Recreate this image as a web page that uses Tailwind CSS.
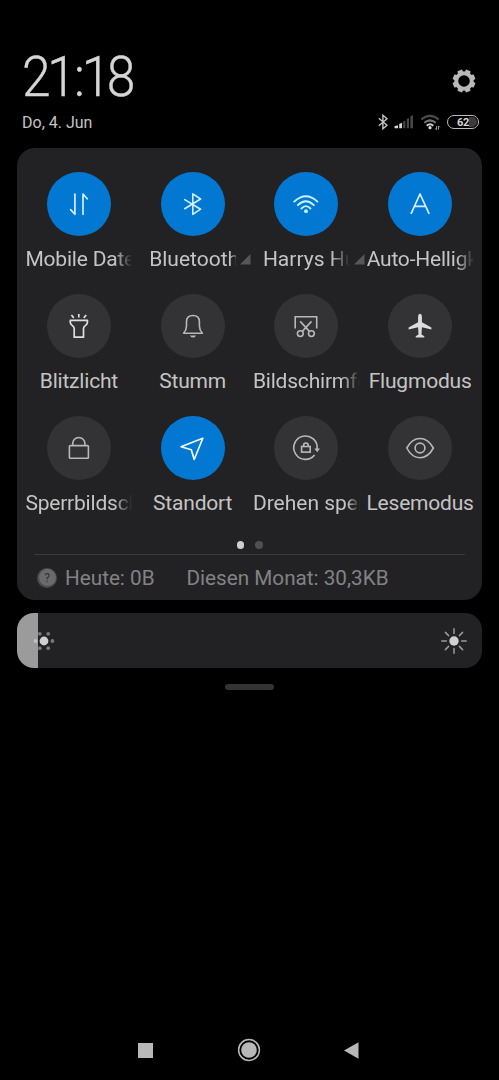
<!DOCTYPE html>
<html lang="de">
<head>
<meta charset="utf-8">
<title>Schnelleinstellungen</title>
<script src="https://cdn.jsdelivr.net/npm/@tailwindcss/browser@4"></script>
</head>
<body class="bg-black">
<div class="flex h-[1080px] w-[499px] flex-col overflow-hidden bg-black font-['Roboto',sans-serif] text-[#c4c4c4]">
  <header class="flex h-[148px] flex-col pl-[22px] pr-[20px] pt-[44px]">
    <div class="flex h-[66px] justify-between">
      <div class="origin-left scale-x-[0.92] text-[56px] font-light leading-[66px] text-[#d6d6d6] [-webkit-text-stroke:0.4px_#d6d6d6]"><span class="tracking-[-3.7px]">2</span><span class="tracking-[-1.8px]">1</span><span class="tracking-[-3.6px]">:</span><span class="tracking-[-3.9px]">1</span><span>8</span></div>
      <svg class="mt-[25px] mr-[3px] size-6" viewBox="-12 -12 24 24" fill="none">
        <circle r="7.7" stroke="#b9b9b9" stroke-width="3.8"/>
        <g fill="#b9b9b9">
          <path d="M-3.2-8-2.3-11.4H2.3L3.2-8Z" transform="rotate(22.5)"/>
          <path d="M-3.2-8-2.3-11.4H2.3L3.2-8Z" transform="rotate(67.5)"/>
          <path d="M-3.2-8-2.3-11.4H2.3L3.2-8Z" transform="rotate(112.5)"/>
          <path d="M-3.2-8-2.3-11.4H2.3L3.2-8Z" transform="rotate(157.5)"/>
          <path d="M-3.2-8-2.3-11.4H2.3L3.2-8Z" transform="rotate(202.5)"/>
          <path d="M-3.2-8-2.3-11.4H2.3L3.2-8Z" transform="rotate(247.5)"/>
          <path d="M-3.2-8-2.3-11.4H2.3L3.2-8Z" transform="rotate(292.5)"/>
          <path d="M-3.2-8-2.3-11.4H2.3L3.2-8Z" transform="rotate(337.5)"/>
        </g>
      </svg>
    </div>
    <div class="mt-[2px] flex h-5 items-center justify-between">
      <div class="pt-[2px] text-[16px] leading-5">Do, 4. Jun</div>
      <div class="flex h-5 items-center">
        <svg class="h-5 w-[70px]" viewBox="375 112 70 20" fill="none">
          <path d="M378.8 118.2 387 125.3 382.9 128.8V115.2L387 118.7 378.8 125.8" stroke="#c4c4c4" stroke-width="1.4"/>
          <path d="M394.5 128.3V126.3L398 125.3V128.3ZM399.2 128.3V124L402 122.7V128.3Z" fill="#d8d8d8"/>
          <path d="M403.2 128.3V121.5L405.4 120.5V128.3ZM406.8 128.3V119L409 118V128.3ZM410.4 128.3V116.5L413 115V128.3Z" fill="#484848"/>
          <path d="M421.3 119.6Q430 112.2 438.7 119.6" stroke="#4c4c4c" stroke-width="2"/>
          <path d="M424.3 122.8Q430 118 435.7 122.8" stroke="#777" stroke-width="2"/>
          <path d="M426.7 125.8Q430 122.8 433.3 125.8" stroke="#d0d0d0" stroke-width="2"/>
          <circle cx="430" cy="127.7" r="1.6" fill="#e0e0e0"/>
          <path d="M436.6 126V129.7L435.2 128.5M438.5 129.7V126L439.8 127.3" stroke="#aaa" stroke-width=".9"/>
        </svg>
        <div class="ml-[2px] flex h-[14px] w-[32px] items-center justify-center rounded-full border-[1.5px] border-[#bcbcbc] p-px">
          <div class="flex h-full w-full items-center justify-center rounded-full bg-[linear-gradient(90deg,transparent_72%,#3c3c3c_72%)] text-[11px] font-bold leading-none tracking-[-0.4px] text-[#d8d8d8]">62</div>
        </div>
      </div>
    </div>
  </header>

  <main class="mx-[17px] h-[452px] rounded-[18px] bg-[#222224] px-[5px] pt-[24px]">
    <div class="grid grid-cols-4 text-[21px] leading-[26px] tracking-[-0.2px]">
      <div class="flex h-[122px] flex-col items-center">
        <svg class="size-16 rounded-full bg-[#0278d2]" viewBox="0 0 64 64" fill="none" stroke="#d6efff" stroke-width="1.7" stroke-linecap="round" stroke-linejoin="round"><path d="M27.9 22V42.3L23.6 37.6M36 42.3V22L40.2 26.8"/></svg>
        <div class="mt-[10px] w-[107px] overflow-hidden whitespace-nowrap [mask-image:linear-gradient(90deg,#000_84%,transparent)]">Mobile Daten</div>
      </div>
      <div class="flex h-[122px] flex-col items-center">
        <svg class="size-16 rounded-full bg-[#0278d2]" viewBox="0 0 64 64" fill="none" stroke="#d6efff" stroke-width="1.6" stroke-linecap="round" stroke-linejoin="round"><path d="M23.7 27.6 39.6 37.2 31.8 42.3V21.9L39.6 27 23.7 36.7"/></svg>
        <div class="mt-[10px] flex w-[87px] whitespace-nowrap">
          <div class="w-[87px] shrink-0 overflow-hidden tracking-normal [mask-image:linear-gradient(90deg,#000_92%,transparent_104%)]">Bluetooth</div>
          <svg class="ml-[4px] mt-[8px] size-[11px] shrink-0" viewBox="0 0 11 11"><path d="M0 10.5 10.5 0V10.5Z" fill="#565658"/></svg>
        </div>
      </div>
      <div class="flex h-[122px] flex-col items-center">
        <svg class="size-16 rounded-full bg-[#0278d2]" viewBox="0 0 64 64" fill="none" stroke="#c9f2ff" stroke-width="1.9" stroke-linecap="round"><path d="M20.2 29.6Q32 19 43.4 29.6M23.8 33.1Q32 25.3 39.9 33.1M27.4 36.5Q32 31.8 36.4 36.5"/><circle cx="32" cy="39.2" r="1.9" fill="#c9f2ff" stroke="none"/></svg>
        <div class="mt-[10px] flex w-[87px] whitespace-nowrap">
          <div class="w-[87px] shrink-0 overflow-hidden tracking-normal [mask-image:linear-gradient(90deg,#000_78%,transparent)]">Harrys Hut</div>
          <svg class="ml-[4px] mt-[8px] size-[11px] shrink-0" viewBox="0 0 11 11"><path d="M0 10.5 10.5 0V10.5Z" fill="#565658"/></svg>
        </div>
      </div>
      <div class="flex h-[122px] flex-col items-center">
        <svg class="size-16 rounded-full bg-[#0278d2]" viewBox="0 0 64 64" fill="none" stroke="#d6efff" stroke-width="1.7" stroke-linejoin="round"><path d="M23 41.8 32 22 41.2 41.8M26.4 34.4H37.8"/></svg>
        <div class="mt-[10px] w-[107px] overflow-hidden whitespace-nowrap [mask-image:linear-gradient(90deg,#000_84%,transparent)]">Auto-Helligkeit</div>
      </div>

      <div class="flex h-[122px] flex-col items-center">
        <svg class="size-16 rounded-full bg-[#333335]" viewBox="0 0 64 64" fill="none" stroke="#dedede" stroke-width="1.7" stroke-linejoin="round"><path d="M23.3 26.3H40.4V28.6Q40.4 30.2 38.5 31.4 36.5 32.6 36.5 34.5V43.2H27.2V34.5Q27.2 32.6 25.2 31.4 23.3 30.2 23.3 28.6ZM31.8 20V23.6M24.4 21 26.8 23.9M39.2 21 36.8 23.9"/></svg>
        <div class="mt-[10px]">Blitzlicht</div>
      </div>
      <div class="flex h-[122px] flex-col items-center">
        <svg class="size-16 rounded-full bg-[#333335]" viewBox="0 0 64 64" fill="none" stroke="#b8b8b8" stroke-width="1.6" stroke-linejoin="round"><path d="M22.6 39.2Q25.5 36 25.5 32V27.8Q25.5 21.5 32 21.5T38.4 27.8V32Q38.4 36 41.4 39.2Z"/><path d="M29 41.4H35Q34 43.6 32 43.6T29 41.4Z" fill="#b8b8b8" stroke="none"/></svg>
        <div class="mt-[10px]">Stumm</div>
      </div>
      <div class="flex h-[122px] flex-col items-center">
        <svg class="size-16 rounded-full bg-[#333335]" viewBox="0 0 64 64" fill="none" stroke="#b8b8b8" stroke-width="1.6"><path d="M21.2 34.5V22.7H42.7V34.5M26.2 27.4 35.4 37.4M37.5 27.4 28.3 37.4"/><circle cx="26.3" cy="39.6" r="2.9"/><circle cx="37.4" cy="39.6" r="2.9"/></svg>
        <div class="mt-[10px] w-[107px] overflow-hidden whitespace-nowrap [mask-image:linear-gradient(90deg,#000_84%,transparent)]">Bildschirmfoto</div>
      </div>
      <div class="flex h-[122px] flex-col items-center">
        <svg class="size-16 rounded-full bg-[#333335]" viewBox="0 0 64 64" fill="#dcdcdc"><path d="M32 19.8Q33.9 20.2 33.9 22.4V28.2L43.4 33.6V35.6L33.9 33.3 33.5 40.4 36.3 42.2V43.6H27.7V42.2L30.5 40.4 30.1 33.3 20.6 35.6V33.6L30.1 28.2V22.4Q30.1 20.2 32 19.8Z"/></svg>
        <div class="mt-[10px]">Flugmodus</div>
      </div>

      <div class="flex h-[122px] flex-col items-center">
        <svg class="size-16 rounded-full bg-[#333335]" viewBox="0 0 64 64" fill="none" stroke="#b8b8b8" stroke-width="1.6"><rect x="22.4" y="29.6" width="19" height="12.6" rx=".8"/><path d="M25.7 29.6V27.6A6.1 6.1 0 0 1 37.9 27.6V29.6"/></svg>
        <div class="mt-[10px] w-[107px] overflow-hidden whitespace-nowrap [mask-image:linear-gradient(90deg,#000_84%,transparent)]">Sperrbildschirm</div>
      </div>
      <div class="flex h-[122px] flex-col items-center">
        <svg class="size-16 rounded-full bg-[#0278d2]" viewBox="0 0 64 64" fill="none" stroke="#f2faff" stroke-width="1.7" stroke-linejoin="round"><path d="M41.8 22.2 20 30.8 30.3 33.8 33.2 43.5Z"/></svg>
        <div class="mt-[10px]">Standort</div>
      </div>
      <div class="flex h-[122px] flex-col items-center">
        <svg class="size-16 rounded-full bg-[#333335]" viewBox="0 0 64 64" fill="none" stroke="#b8b8b8" stroke-width="1.6"><path d="M43.1 33A11.7 11.7 0 1 0 40.6 39"/><path d="M40.4 32.4H45.9L43.2 36.2Z" fill="#b8b8b8" stroke="none"/><rect x="27.6" y="30.5" width="8.6" height="5.6"/><path d="M29.6 30.5V29.3A2.3 2.3 0 0 1 34.2 29.3V30.5"/></svg>
        <div class="mt-[10px] w-[107px] overflow-hidden whitespace-nowrap tracking-normal [mask-image:linear-gradient(90deg,#000_88%,transparent)]">Drehen sperren</div>
      </div>
      <div class="flex h-[122px] flex-col items-center">
        <svg class="size-16 rounded-full bg-[#333335]" viewBox="0 0 64 64" fill="none" stroke="#b8b8b8" stroke-width="1.6" stroke-linejoin="round"><path d="M18.8 32C22 26 26.5 22.5 32 22.5S42 26 45.4 32C42 38.2 37.5 41.7 32 41.7S22 38.2 18.8 32Z"/><circle cx="32" cy="32" r="4.9"/></svg>
        <div class="mt-[10px]">Lesemodus</div>
      </div>
    </div>

    <div class="mt-[3px] flex h-[8px] justify-center gap-[11px]">
      <div class="size-[7.5px] rounded-full bg-[#cfcfcf]"></div>
      <div class="size-[7.5px] rounded-full bg-[#505052]"></div>
    </div>
    <div class="mx-[12px] mt-[5px] h-px bg-[#3a3a3c]"></div>
    <div class="flex h-[45px] items-center pl-[15px] text-[20.7px] leading-6 text-[#828284]">
      <div class="flex size-[20px] items-center justify-center rounded-full bg-[#4c4c4e]">
        <div class="flex size-[17px] items-center justify-center rounded-full bg-[#6a6a6c] text-[12px] leading-none text-[#303032]">?</div>
      </div>
      <div class="ml-[8px] w-[121.5px]">Heute: 0B</div>
      <div>Diesen Monat: 30,3KB</div>
    </div>
  </main>

  <div class="mx-[17px] mt-[13px] flex h-[55px] overflow-hidden rounded-[17px] bg-[linear-gradient(90deg,#9b9b9b_21.5px,#222224_21.5px)]">
    <div class="flex w-full items-center justify-between pl-[15px] pr-[14px]">
      <svg class="h-6 w-6" viewBox="-12 -12 24 24" fill="#77777a"><circle cx="-8.4" r="2" fill="#c0c0c0"/><circle cx="8.4" r="1.9"/><circle cx="-4.2" cy="-7.2" r="1.9"/><circle cx="4.2" cy="-7.2" r="1.9"/><circle cx="-4.2" cy="7.2" r="1.9"/><circle cx="4.2" cy="7.2" r="1.9"/><circle r="4.4" fill="#d0d0d0"/></svg>
      <svg class="h-[28px] w-[28px]" viewBox="-14 -14 28 28" stroke="#9a9a9c" stroke-width="1.5" stroke-linecap="round"><circle r="4.7" fill="#d0d0d0" stroke="none"/><path d="M0-12.2V-7.6M0 12.2V7.6M-12.2 0H-7.6M12.2 0H7.6M-8.6-8.6-5.4-5.4M8.6-8.6 5.4-5.4M-8.6 8.6-5.4 5.4M8.6 8.6 5.4 5.4"/></svg>
    </div>
  </div>
  <div class="mx-auto mt-[15.5px] h-[6.5px] w-[49px] rounded-full bg-[#333335]"></div>

  <nav class="mb-[18px] mt-auto flex h-6 items-center pl-[138px]">
    <div class="size-[15px] bg-[#b8b8b8]"></div>
    <svg class="ml-[84px] size-6" viewBox="-12 -12 24 24"><circle r="10.4" fill="none" stroke="#b8b8b8" stroke-width="1.5"/><circle r="7.8" fill="#b8b8b8"/></svg>
    <svg class="ml-[82px] h-[17px] w-[16px]" viewBox="0 0 16 17"><path d="M1 8.5 15.5.3V16.7Z" fill="#b8b8b8"/></svg>
  </nav>
</div>
</body>
</html>
